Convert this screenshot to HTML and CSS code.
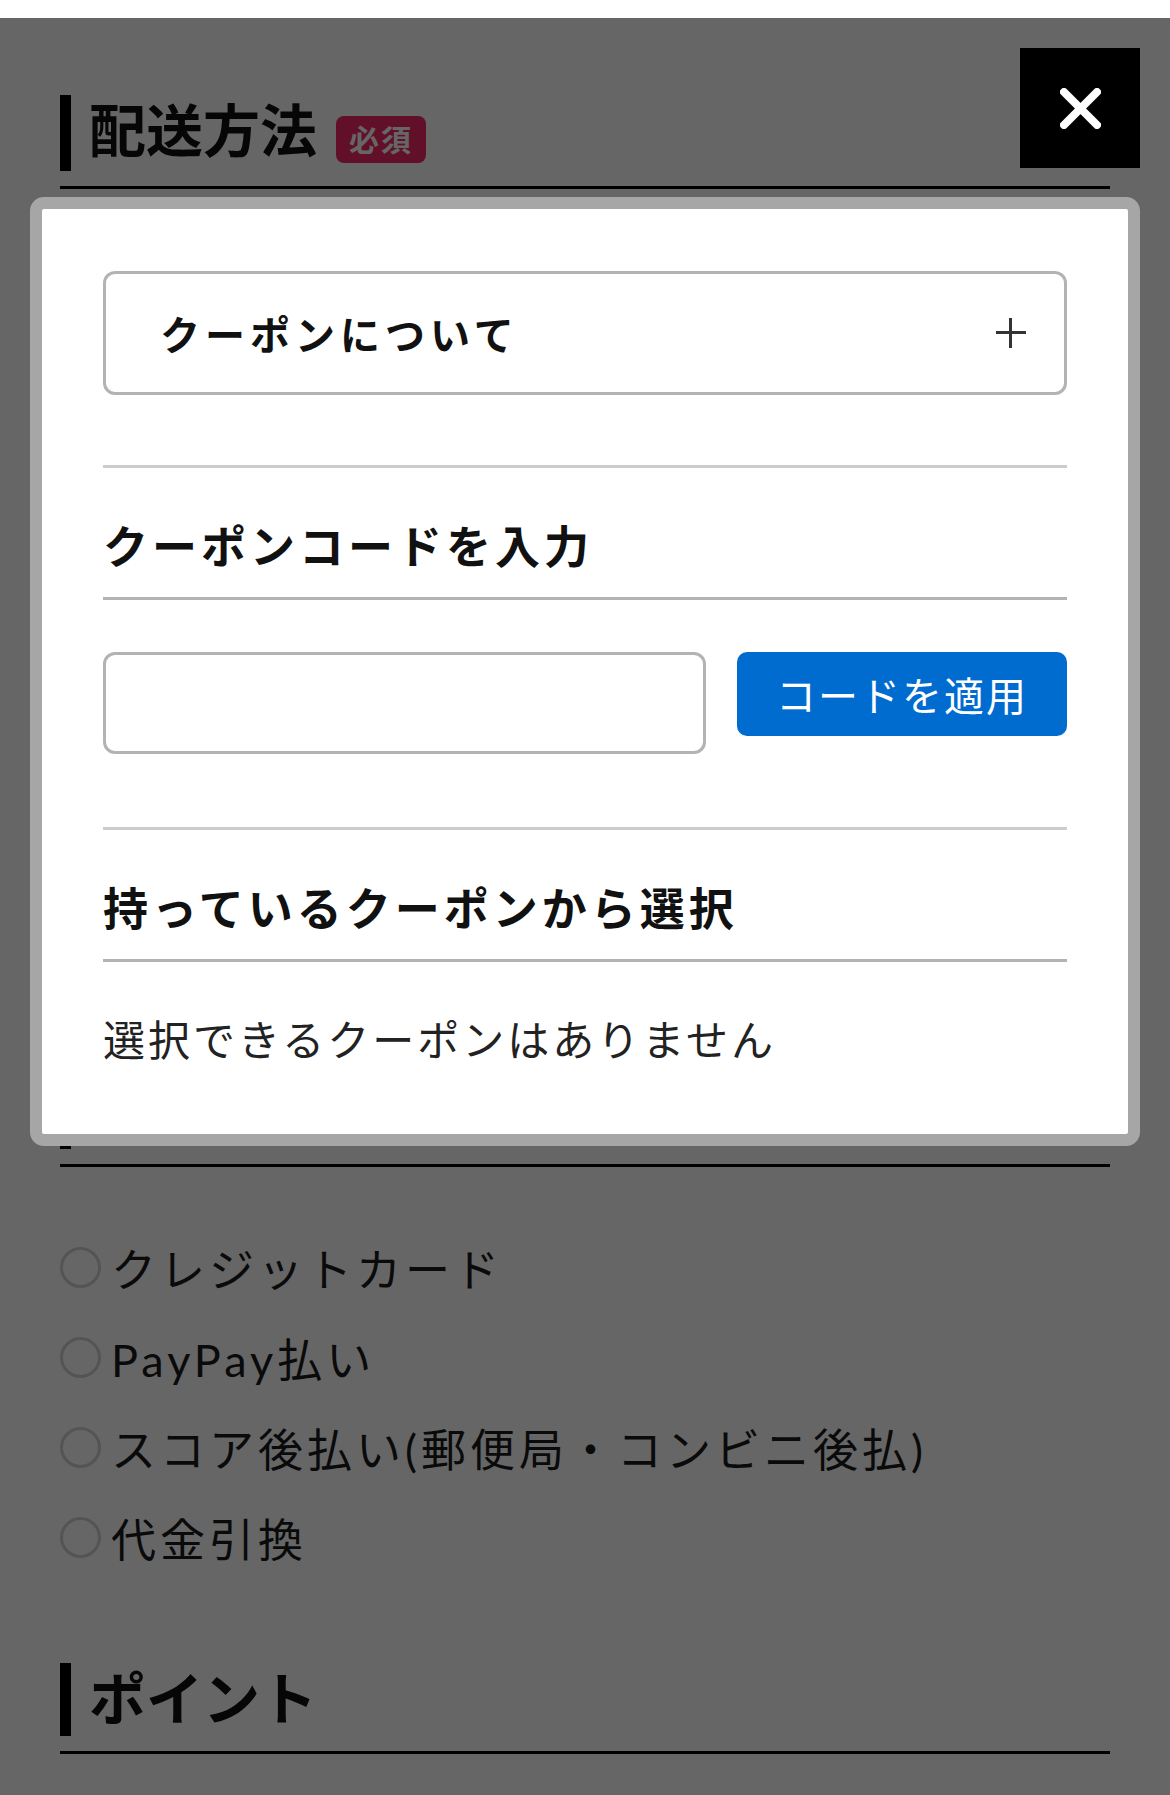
FILE: index.html
```html
<!DOCTYPE html>
<html lang="ja">
  <head>
    <meta charset="UTF-8" />
    <title>ご注文手続き</title>
    <link rel="stylesheet" href="styles.css">
  </head>
  <body>
    <main class="page">
      <section class="section">
        <div class="section-head">
          <h2 class="section-title">配送方法</h2>
          <span class="badge">必須</span>
        </div>
        <div class="ship-body"></div>
      </section>

      <section class="section">
        <div class="section-head">
          <h2 class="section-title">お支払い方法</h2>
          <span class="badge">必須</span>
        </div>
        <ul class="radio-list">
          <li class="radio-item"><span class="radio"></span>クレジットカード</li>
          <li class="radio-item"><span class="radio"></span>PayPay払い</li>
          <li class="radio-item"><span class="radio"></span>スコア後払い(郵便局・コンビニ後払)</li>
          <li class="radio-item"><span class="radio"></span>代金引換</li>
        </ul>
      </section>

      <section class="section">
        <div class="section-head">
          <h2 class="section-title">ポイント</h2>
        </div>
      </section>
    </main>

    <div class="overlay"></div>

    <button class="close-btn" type="button" aria-label="閉じる">
      <svg width="41" height="41" viewBox="0 0 41 41">
        <path d="M4 4 L37 37 M37 4 L4 37" stroke="#fff" stroke-width="8" stroke-linecap="round" fill="none" />
      </svg>
    </button>

    <div class="modal">
      <div class="modal-body">
        <div class="accordion">
          <span class="accordion-title">クーポンについて</span>
          <span class="plus"></span>
        </div>

        <div class="coupon-block">
          <h3 class="block-title">クーポンコードを入力</h3>
          <div class="code-form">
            <input class="code-input" type="text" />
            <button class="apply-btn" type="button">コードを適用</button>
          </div>
        </div>

        <div class="coupon-block coupon-block-list">
          <h3 class="block-title">持っているクーポンから選択</h3>
          <p class="empty-text">選択できるクーポンはありません</p>
        </div>
      </div>
    </div>
  </body>
</html>
```

FILE: styles.css
```css
* {
  box-sizing: border-box;
}
body {
  margin: 0;
  background: #fff;
  color: #1a1a1a;
  font-family: "Lato", "Noto Sans CJK JP", sans-serif;
}
.page {
  padding: 95px 60px 0;
}
.section + .section {
  margin-top: 81px;
}
.section-head {
  display: flex;
  align-items: stretch;
  padding-bottom: 15px;
  border-bottom: 3px solid #000;
}
.section-title {
  margin: 0;
  padding: 0 0 3px 18px;
  border-left: 11px solid #000;
  font-size: 57px;
  line-height: 70px;
  font-weight: 700;
  color: #111;
}
.badge {
  margin: 21px 0 8px 19px;
  width: 90px;
  height: 47px;
  border-radius: 8px;
  background: #f5266a;
  color: #fff;
  font-size: 30px;
  font-weight: 700;
  letter-spacing: 2px;
  line-height: 47px;
  text-align: center;
}
.ship-body {
  height: 803px;
}
.radio-list {
  list-style: none;
  margin: 0;
  padding: 55px 0 0;
}
.radio-item {
  display: flex;
  align-items: center;
  height: 90px;
  font-size: 45px;
  letter-spacing: 4px;
}
.radio {
  width: 41px;
  height: 41px;
  margin-right: 10px;
  border: 3px solid #d2d2d2;
  border-radius: 50%;
  background: #fff;
}

/* modal */
.overlay {
  position: fixed;
  top: 18px;
  left: 0;
  right: 0;
  bottom: 0;
  background: rgba(0, 0, 0, 0.6);
}
.close-btn {
  position: fixed;
  top: 48px;
  left: 1020px;
  width: 120px;
  height: 120px;
  border: none;
  padding: 0;
  background: #000;
  display: flex;
  align-items: center;
  justify-content: center;
  cursor: pointer;
}
.modal {
  position: fixed;
  top: 197px;
  left: 30px;
  width: 1110px;
  border: 12px solid #a6a6a6;
  border-radius: 14px;
  background: #fff;
}
.modal-body {
  padding: 62px 61px 64px;
}
.accordion {
  display: flex;
  align-items: center;
  justify-content: space-between;
  height: 124px;
  padding: 0 38px 0 54px;
  border: 3px solid #b3b3b3;
  border-radius: 12px;
}
.accordion-title {
  font-size: 40px;
  font-weight: 700;
  letter-spacing: 5px;
  color: #111;
}
.plus {
  position: relative;
  width: 30px;
  height: 30px;
}
.plus::before,
.plus::after {
  content: "";
  position: absolute;
  background: #333;
}
.plus::before {
  left: 0;
  top: 13px;
  width: 30px;
  height: 3px;
}
.plus::after {
  left: 13px;
  top: 0;
  width: 3px;
  height: 30px;
}
.coupon-block {
  margin-top: 70px;
  border-top: 3px solid #ccc;
}
.coupon-block-list {
  margin-top: 73px;
}
.block-title {
  margin: 0;
  padding: 44px 0 14px;
  border-bottom: 3px solid #b3b3b3;
  font-size: 45px;
  line-height: 71px;
  font-weight: 700;
  letter-spacing: 4px;
  color: #111;
}
.code-form {
  display: flex;
  align-items: flex-start;
  gap: 31px;
  margin-top: 52px;
}
.code-input {
  flex: 1;
  min-width: 0;
  height: 102px;
  border: 3px solid #b3b3b3;
  border-radius: 12px;
  font-size: 42px;
  padding: 0 24px;
}
.apply-btn {
  width: 330px;
  height: 84px;
  border: none;
  border-radius: 10px;
  background: #006ccf;
  color: #fff;
  font-family: inherit;
  font-size: 40px;
  letter-spacing: 2px;
  cursor: pointer;
}
.empty-text {
  margin: 0;
  padding-top: 48px;
  font-size: 42px;
  line-height: 60px;
  letter-spacing: 3px;
  color: #222;
}
```
